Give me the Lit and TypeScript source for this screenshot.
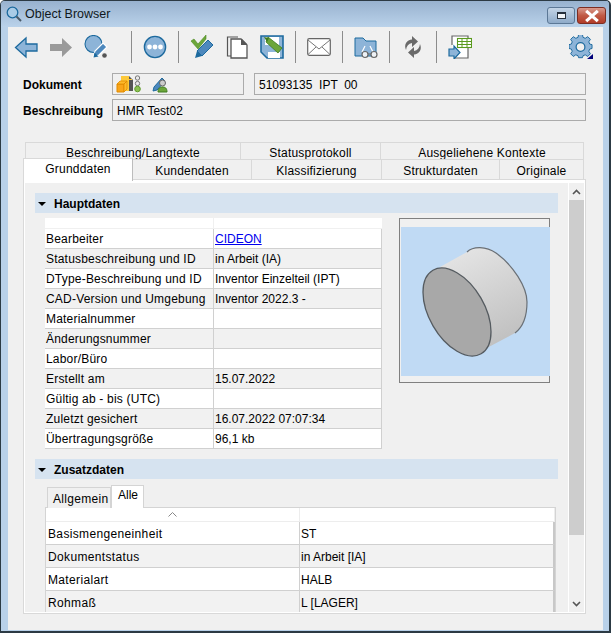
import { LitElement, html, css } from 'lit';
import { customElement } from 'lit/decorators.js';

const mainRows: [string, string][] = [
  ['Bearbeiter', 'CIDEON'],
  ['Statusbeschreibung und ID', 'in Arbeit (IA)'],
  ['DType-Beschreibung und ID', 'Inventor Einzelteil (IPT)'],
  ['CAD-Version und Umgebung', 'Inventor 2022.3 -'],
  ['Materialnummer', ''],
  ['Änderungsnummer', ''],
  ['Labor/Büro', ''],
  ['Erstellt am', '15.07.2022'],
  ['Gültig ab - bis (UTC)', ''],
  ['Zuletzt gesichert', '16.07.2022 07:07:34'],
  ['Übertragungsgröße', '96,1 kb'],
];

const extraRows: [string, string][] = [
  ['Basismengeneinheit', 'ST'],
  ['Dokumentstatus', 'in Arbeit [IA]'],
  ['Materialart', 'HALB'],
  ['Rohmaß', 'L [LAGER]'],
];

const topTabs: [string, number][] = [
  ['Beschreibung/Langtexte', 216],
  ['Statusprotokoll', 141],
  ['Ausgeliehene Kontexte', 204],
];

const bottomTabs: [string, number][] = [
  ['Grunddaten', 110],
  ['Kundendaten', 120],
  ['Klassifizierung', 131],
  ['Strukturdaten', 119],
  ['Originale', 85],
];

const backIcon = html`<svg class="icon" viewBox="0 0 24 24"><path d="M1.500 12.500 12 3v6h11v7H12v6z" fill="#8db4d8" stroke="#1d6a9e" stroke-width="1.300"/></svg>`;
const forwardIcon = html`<svg class="icon" viewBox="0 0 24 24"><path d="M23 12.500 13 3v6H1v7h12v6z" fill="#9a9a9a"/></svg>`;
const searchIcon = html`<svg class="icon" viewBox="0 0 24 24"><circle cx="9.500" cy="9" r="8.500" fill="#8db4d8" stroke="#1d6a9e" stroke-width="1.100"/><path d="m9 22 2-6 8-8 4 4-8 8z" fill="#4d88bd" stroke="#fff" stroke-width="1.200"/><path d="m9.500 22.500 1-5 4 4z" fill="#1d6a9e"/><circle cx="20.500" cy="20.500" r="2.300" fill="#555"/></svg>`;
const moreIcon = html`<svg class="icon" viewBox="0 0 24 24"><circle cx="12" cy="12" r="10.600" fill="#8db4d8" stroke="#1d6a9e" stroke-width="1.400"/><circle cx="6.500" cy="12" r="2.400" fill="#fff"/><circle cx="12" cy="12" r="2.400" fill="#fff"/><circle cx="17.500" cy="12" r="2.400" fill="#fff"/></svg>`;
const checkPenIcon = html`<svg class="icon" viewBox="0 0 24 24"><path d="M1 6 4 4 8 9 16 0v4L8 14z" fill="#6ca63a" stroke="#4c8a24" stroke-width=".6"/><path d="M7 16 18 5l5 5-11 11z" fill="#4d88bd" stroke="#1d6a9e" stroke-width="1"/><path d="m5 23 2-7 5 5z" fill="#1d6a9e"/></svg>`;
const copyIcon = html`<svg class="icon" viewBox="0 0 24 24"><path d="M6 21H2.500V2H13" fill="none" stroke="#555" stroke-width="1.200"/><path d="M6 23V4h10l6 6v13z" fill="#fff" stroke="#555" stroke-width="1.300"/><path d="M16 4h1l5 5v1h-6z" fill="#555"/></svg>`;
const saveIcon = html`<svg class="icon" viewBox="0 0 24 24"><path d="M1 1h22v22H7l-6-6z" fill="#8db4d8" stroke="#1d6a9e" stroke-width="1.600"/><path d="M5 2h14v8H5z" fill="#fff"/><path d="M8 17h12v6H8z" fill="#fff"/><path d="m6 7 2-5 14 11-4 5z" fill="#6ca63a" stroke="#3f7a20" stroke-width=".8"/><path d="m4 2 5 1-2 4z" fill="#3f7a20"/></svg>`;
const mailIcon = html`<svg class="icon" viewBox="0 0 24 24"><rect x=".7" y="3.700" width="22.600" height="16.600" rx="1.500" fill="#fff" stroke="#666" stroke-width="1.200"/><path d="m1 5 11 9 11-9M1 19.500l8-7.500m14 7.500-8-7.500" fill="none" stroke="#777" stroke-width="1"/></svg>`;
const folderIcon = html`<svg class="icon" viewBox="0 0 24 24"><path d="M1 21V3h8l3 3h10v15z" fill="#8db4d8" stroke="#1d6a9e" stroke-width="1"/><path d="M8 17l3-6m8 6-3-6" fill="none" stroke="#fff" stroke-width="1.200"/><circle cx="11" cy="19.500" r="3" fill="#eef2f6" stroke="#666" stroke-width="1.200"/><circle cx="20" cy="19.500" r="3" fill="#eef2f6" stroke="#666" stroke-width="1.200"/><path d="M14 19h3" stroke="#666" stroke-width="1.200"/></svg>`;
const refreshIcon = html`<svg class="icon" viewBox="0 0 24 24"><path d="M5 15C2.500 9 6 5 11 4.500V1l6 5.500-6 5.500V8C7.500 8.500 5.500 11 5 15z" fill="#6a6a6a"/><path d="M19 9c2.500 6-1 10-6 10.500V23l-6-5.500 6-5.500v4c3.500-.5 5.500-3 6-7z" fill="#6a6a6a"/></svg>`;
const exportIcon = html`<svg class="icon" viewBox="0 0 24 24"><path d="M4 10V1h16v22H7" fill="#fff" stroke="#666" stroke-width="1.200"/><rect x="9.500" y="3.500" width="14" height="9" fill="#fff" stroke="#5a9a1e" stroke-width="1.100"/><path d="M9.500 6.500h14M9.500 9.500h14M14 3.500v9M19 3.500v9" stroke="#5a9a1e" stroke-width="1"/><path d="M1 14h5v-3l6 6.500L6 24v-3H1z" fill="#8db4d8" stroke="#1d6a9e" stroke-width="1.200"/></svg>`;
const gearIcon = html`<svg class="icon" viewBox="0 0 24 24"><path d="M10 1h4l.6 3 2.300 1 2.600-1.700 2.800 2.800L20.600 8.700l1 2.300 2.400.6v4l-2.400.6-1 2.300 1.700 2.600-2.800 2.800-2.600-1.700-2.300 1-.6 2h-4l-.6-2-2.300-1-2.600 1.700-2.800-2.800 1.700-2.600-1-2.300-2.400-.6v-4l2.400-.6 1-2.300L1.700 6.100 4.500 3.300 7.100 5l2.300-1z" transform="translate(0 -1.500) scale(.96)" fill="#8db4d8" stroke="#1d6a9e" stroke-width="1"/><circle cx="11.500" cy="12" r="4.400" fill="#f0f0f0" stroke="#1d6a9e" stroke-width="1.200"/><path d="M24 24h-6l6-5z" fill="#00007a"/></svg>`;

@customElement('app-root')
export class AppRoot extends LitElement {
  static styles = css`
    :host {
      display: block;
      width: 611px;
      height: 635px;
      background: #fff;
      font-family: 'Liberation Sans', Arial, sans-serif;
      font-size: 12px;
      color: #000;
    }

    .window {
      box-sizing: border-box;
      height: 633px;
      display: flex;
      flex-direction: column;
      border: 1px solid #2c3a44;
      border-width: 1px 2px 2px 1px;
      border-radius: 5px 5px 0 0;
      background: #b9d1e9;
      overflow: hidden;
    }

    .titlebar {
      flex: none;
      height: 26px;
      display: flex;
      align-items: center;
      padding-left: 5px;
      gap: 3px;
      background: linear-gradient(#98b2cf, #bad2ea);
      font-size: 12.5px;
      color: #101820;
    }

    .titlebar svg {
      width: 16px;
      height: 16px;
    }

    .winbtns {
      margin-left: auto;
      margin-right: 3px;
      margin-top: 3px;
      display: flex;
      gap: 2px;
    }

    .winbtn {
      box-sizing: border-box;
      height: 17px;
      display: flex;
      align-items: center;
      justify-content: center;
      border: 1px solid #5c7896;
      border-radius: 3px;
    }

    .winbtn.min {
      width: 28px;
      background: linear-gradient(#c3d4e6, #8fabc9);
    }

    .winbtn.close {
      width: 29px;
      border-color: #7c2d22;
      background: linear-gradient(#d99a8c 0, #c05a45 50%, #b23c28 100%);
      color: #fff;
    }

    .min i {
      display: block;
      box-sizing: border-box;
      width: 9px;
      height: 7px;
      border: 1px solid #26303c;
      border-top-width: 2px;
      background: #f2f5f8;
    }

    .client {
      flex: 1;
      min-height: 0;
      margin: 0 6px 1px 7px;
      background: #f0f0f0;
      display: flex;
      flex-direction: column;
    }

    .toolbar {
      flex: none;
      height: 46px;
      box-sizing: border-box;
      padding: 0 10px 7px 6px;
      display: flex;
      align-items: center;
    }

    .icon {
      flex: none;
      display: block;
      width: 24px;
      height: 24px;
      margin-right: 11px;
    }

    .toolbar .end {
      margin: 0 0 0 auto;
    }

    .toolbar .end .icon {
      margin: 0;
    }

    .sep {
      flex: none;
      width: 1px;
      height: 32px;
      margin-right: 11px;
      background: #8c8c8c;
    }

    .sep.wide {
      margin-left: 12px;
    }

    .meta {
      flex: none;
      margin: 0 17px 0 15px;
      display: grid;
      grid-template-columns: 89px 132px 1fr;
      grid-auto-rows: 22px;
      row-gap: 4px;
      align-items: center;
    }

    .meta .label {
      font-weight: bold;
      padding-top: 2px;
    }

    .field {
      box-sizing: border-box;
      height: 22px;
      display: flex;
      align-items: center;
      padding: 2px 0 0 4px;
      border: 1px solid #ababab;
    }

    .field.icons {
      padding: 0 0 0 3px;
    }

    .field.num {
      margin-left: 10px;
      white-space: pre;
    }

    .field.full {
      grid-column: 2 / 4;
    }

    .field svg {
      flex: none;
      display: block;
      height: 18px;
    }

    .field svg.user {
      margin-left: 11px;
    }

    .tabs {
      flex: none;
      margin: 21px 0 0 15px;
      width: 563px;
      height: 37px;
      display: flex;
      flex-direction: column;
      letter-spacing: 0.2px;
    }

    .tabrow {
      display: flex;
      text-align: center;
    }

    .tabrow.top {
      margin-left: 2px;
      height: 17px;
    }

    .tabrow.bottom {
      height: 20px;
    }

    .tab {
      flex: none;
      box-sizing: border-box;
      border: 1px solid #d9d9d9;
      border-bottom: 0;
      margin-right: -1px;
      background: #f0f0f0;
    }

    .tabrow.top .tab {
      line-height: 21px;
      height: 17px;
      overflow: hidden;
    }

    .tabrow.bottom .tab {
      line-height: 23px;
    }

    .tabrow.bottom .tab.active {
      position: relative;
      z-index: 1;
      margin-top: -1px;
      height: 23px;
      line-height: 20px;
      background: #fff;
      border-right-color: #bdbdbd;
    }

    .panel {
      flex: none;
      box-sizing: border-box;
      margin-left: 15px;
      width: 563px;
      height: 435px;
      padding: 3px 1px 1px;
      border: 1px solid #d9d9d9;
      background: #fff;
      display: flex;
    }

    .scroll {
      flex: 1;
      min-width: 0;
      overflow: hidden;
      padding: 10px 0 0 10px;
      background: #f0f0f0;
    }

    .section {
      box-sizing: border-box;
      width: 523px;
      height: 20px;
      display: flex;
      align-items: center;
      gap: 8px;
      padding: 1px 0 0 3px;
      background: #d6e3f0;
      font-weight: bold;
    }

    .section i {
      display: block;
      width: 0;
      height: 0;
      border-style: solid;
      border-width: 4px 4.5px 0;
      border-color: #000 transparent transparent;
    }

    .main {
      display: flex;
      align-items: flex-start;
      margin: 5px 0 10px 10px;
    }

    .grid {
      width: 337px;
      display: grid;
      grid-template-columns: 168px 168px;
      column-gap: 1px;
    }

    .grid .head {
      height: 10px;
      background: #fff;
      margin-bottom: 1px;
    }

    .grid .cell {
      height: 20px;
      box-sizing: border-box;
      padding-left: 1px;
      line-height: 21px;
      white-space: nowrap;
      background: #fff;
      border-bottom: 1px solid #d0d0d0;
    }

    .grid .cell.alt {
      background: #f1f1f1;
    }

    .grid .cell.val {
      position: relative;
      border-right: 1px solid #d0d0d0;
    }

    .grid .cell.key {
      position: relative;
      width: 169px;
      border-right: 1px solid #d0d0d0;
      letter-spacing: 0.2px;
    }

    a {
      color: #0000ee;
      text-decoration: underline;
    }

    .preview {
      flex: none;
      margin-left: 17px;
      box-sizing: border-box;
      width: 151px;
      height: 165px;
      padding: 8px 0 6px 1px;
      border: 1px solid #808080;
    }

    .preview svg {
      display: block;
      width: 149px;
      height: 149px;
    }

    .subtabs {
      margin: 6px 0 0 12px;
      height: 23px;
      display: flex;
      align-items: flex-end;
      position: relative;
      z-index: 1;
    }

    .subtab {
      box-sizing: border-box;
      width: 64px;
      height: 21px;
      line-height: 23px;
      padding-left: 5px;
      border: 1px solid #d4d4d4;
      border-bottom: 0;
      background: #f0f0f0;
      letter-spacing: 0.3px;
      white-space: nowrap;
    }

    .subtab.active {
      width: 33px;
      height: 23px;
      line-height: 18px;
      background: #fff;
      padding-left: 6px;
      letter-spacing: 0;
    }

    .extra {
      box-sizing: border-box;
      margin: -1px 0 0 10px;
      width: 511px;
      height: 106px;
      overflow: hidden;
      border: 1px solid #d4d4d4;
      border-width: 1px 1px 0 1px;
      background: #fff;
    }

    .extra .head {
      height: 13px;
      display: grid;
      grid-template-columns: 254px 1fr;
      border-bottom: 1px solid #ededed;
    }

    .extra .head span {
      display: flex;
      align-items: center;
      justify-content: center;
      border-right: 1px solid #ededed;
    }

    .extra .head svg {
      display: block;
      width: 9px;
      height: 5px;
    }

    .extra .row {
      height: 23px;
      box-sizing: border-box;
      display: grid;
      grid-template-columns: 254px 1fr;
      line-height: 24px;
      border-bottom: 1px solid #d0d0d0;
      border-right: 2px solid #c8c8c8;
      background: #fff;
    }

    .extra .row.alt {
      background: #f2f2f2;
    }

    .extra .row span {
      padding-left: 1px;
      white-space: nowrap;
    }

    .extra .row span:first-child {
      padding-left: 2px;
      letter-spacing: 0.35px;
      border-right: 1px solid #d0d0d0;
    }

    .scrollbar {
      flex: none;
      width: 16px;
      box-sizing: border-box;
      display: flex;
      flex-direction: column;
      align-items: center;
      background: #f0f0f0;
      border-left: 1px solid #fff;
    }

    .scrollbar svg {
      flex: none;
      display: block;
      width: 9px;
      height: 6px;
    }

    .scrollbar .up {
      margin: 6px 0 5px;
    }

    .scrollbar .thumb {
      flex: none;
      width: 15px;
      height: 335px;
      background: #cdcdcd;
    }

    .scrollbar .down {
      margin-top: auto;
      margin-bottom: 5px;
    }
  `;

  render() {
    return html`
      <div class="window">
        <div class="titlebar">
          <svg viewBox="0 0 16 16"><circle cx="6.5" cy="6.5" r="5.3" fill="#a9cbe6" stroke="#1d6a9e" stroke-width="1.3"/><path d="m10.5 10.5 4.500 4.500" stroke="#4a5a68" stroke-width="2"/></svg>
          <span>Object Browser</span>
          <div class="winbtns">
            <div class="winbtn min"><i></i></div>
            <div class="winbtn close"><svg width="11" height="9" viewBox="0 0 11 9"><path d="m1.5 1 8 7m0-7-8 7" stroke="#fff" stroke-width="2.2"/></svg></div>
          </div>
        </div>
        <div class="client">
          <div class="toolbar">
            ${backIcon}${forwardIcon}${searchIcon}
            <div class="sep wide"></div>
            ${moreIcon}
            <div class="sep"></div>
            ${checkPenIcon}${copyIcon}${saveIcon}
            <div class="sep"></div>
            ${mailIcon}
            <div class="sep"></div>
            ${folderIcon}
            <div class="sep"></div>
            ${refreshIcon}
            <div class="sep"></div>
            ${exportIcon}
            <div class="end">${gearIcon}</div>
          </div>
          <div class="meta">
            <div class="label">Dokument</div>
            <div class="field icons">
              <svg width="18" viewBox="0 0 18 18">
                <path d="M5 1h8l4 4v11H5z" fill="#555"/>
                <path d="M5 1h8v3h3v1h-3v11H5z" fill="#fdc93a"/>
                <path d="M1 9h7v8H1z" fill="#f9a51a" stroke="#e08a00" stroke-width="1"/>
                <path d="m1 9 3-3h7l-3 3zM8 9l3-3v8l-3 3z" fill="#fdb92a" stroke="#e08a00" stroke-width=".8"/>
              </svg>
              <svg width="7" viewBox="0 0 7 18">
                <circle cx="3.5" cy="3" r="2.2" fill="#e8e8e8" stroke="#777"/>
                <circle cx="3.5" cy="8.5" r="2.2" fill="#e8e8e8" stroke="#777"/>
                <circle cx="3.5" cy="14" r="2.8" fill="#8cc152" stroke="#5f9a2a"/>
              </svg>
              <svg class="user" width="16" viewBox="0 0 16 18">
                <path d="m1 16 1-4 8-9 3 3-8 9z" fill="#4d88bd" stroke="#1d6a9e"/>
                <circle cx="10.5" cy="8" r="3" fill="#ccc" stroke="#666"/>
                <path d="M6 17c0-4 2-5 4.500-5s4.500 1 4.500 5z" fill="#6ca63a" stroke="#3f7a20"/>
              </svg>
            </div>
            <div class="field num">51093135  IPT  00</div>
            <div class="label">Beschreibung</div>
            <div class="field full">HMR Test02</div>
          </div>
          <div class="tabs">
            <div class="tabrow top">
              ${topTabs.map(([t, w]) => html`<div class="tab" style="width:${w}px">${t}</div>`)}
            </div>
            <div class="tabrow bottom">
              ${bottomTabs.map(([t, w], i) => html`<div class="tab ${i === 0 ? 'active' : ''}" style="width:${w}px">${t}</div>`)}
            </div>
          </div>
          <div class="panel">
            <div class="scroll">
              <div class="section"><i></i>Hauptdaten</div>
              <div class="main">
                <div class="grid">
                  <div class="head"></div><div class="head"></div>
                  ${mainRows.map(([k, v], i) => html`
                    <div class="cell key ${i % 2 ? 'alt' : ''}">${k}</div>
                    <div class="cell val ${i % 2 ? 'alt' : ''}">${k === 'Bearbeiter' ? html`<a href="#">${v}</a>` : v}</div>
                  `)}
                </div>
                <div class="preview">
                  <svg viewBox="0 0 149 149">
                    <defs>
                      <linearGradient id="side" x1="0.3" y1="0" x2="0.7" y2="1">
                        <stop offset="0" stop-color="#e4e4e4"/>
                        <stop offset="1" stop-color="#bebebe"/>
                      </linearGradient>
                    </defs>
                    <rect width="149" height="149" fill="#c0daf4"/>
                    <path d="M39 40 66 25C72 19 85 19 95 26 112 38 126 60 126 75 126 88 122 100 114 106L82 123Z" fill="url(#side)"/>
                    <path d="M66 25C72 19 85 19 95 26 112 38 126 60 126 75 126 88 122 100 114 106" fill="none" stroke="#6a7076" stroke-width="1.2"/>
                    <ellipse cx="56" cy="85" rx="27.7" ry="48.2" transform="rotate(-30 56 85)" fill="#a8a8a8" stroke="#555b60" stroke-width="1.3"/>
                  </svg>
                </div>
              </div>
              <div class="section"><i></i>Zusatzdaten</div>
              <div class="subtabs">
                <div class="subtab">Allgemein</div>
                <div class="subtab active">Alle</div>
              </div>
              <div class="extra">
                <div class="head">
                  <span><svg viewBox="0 0 9 5"><path d="m.5 4.500 4-4 4 4" fill="none" stroke="#888"/></svg></span>
                  <span></span>
                </div>
                ${extraRows.map(([k, v], i) => html`
                  <div class="row ${i % 2 ? 'alt' : ''}"><span>${k}</span><span>${v}</span></div>
                `)}
              </div>
            </div>
            <div class="scrollbar">
              <svg class="up" viewBox="0 0 9 6"><path d="m1 5 3.500-3.500L8 5" fill="none" stroke="#555" stroke-width="1.6"/></svg>
              <div class="thumb"></div>
              <svg class="down" viewBox="0 0 9 6"><path d="m1 1 3.500 3.500L8 1" fill="none" stroke="#555" stroke-width="1.6"/></svg>
            </div>
          </div>
        </div>
      </div>
    `;
  }
}
